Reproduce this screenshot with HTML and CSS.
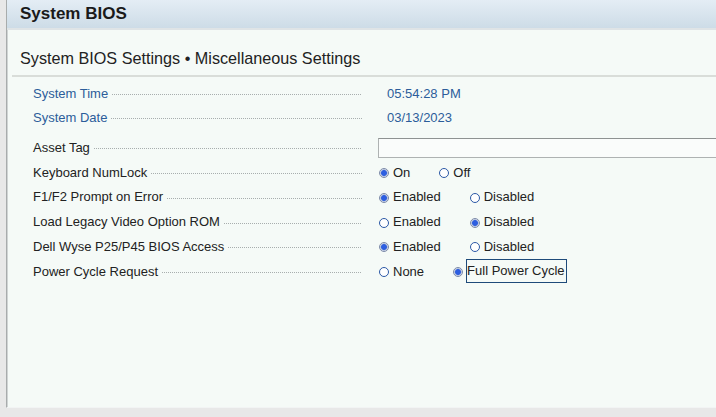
FILE: index.html
```html
<!DOCTYPE html>
<html>
<head>
<meta charset="utf-8">
<link rel="stylesheet" href="styles.css">
</head>
<body>
<div class="panel">
  <div class="header">System BIOS</div>
  <div class="subtitle">System BIOS Settings • Miscellaneous Settings</div>
  <div class="sep"></div>
  <div class="rows info">
    <div class="row"><div class="label blue"><span>System Time</span><i class="dots"></i></div><div class="value blue val-text">05:54:28 PM</div></div>
    <div class="row"><div class="label blue"><span>System Date</span><i class="dots"></i></div><div class="value blue val-text">03/13/2023</div></div>
  </div>
  <div class="rows settings">
    <div class="row"><div class="label"><span>Asset Tag</span><i class="dots"></i></div><div class="value"><div class="input"></div></div></div>
    <div class="row"><div class="label"><span>Keyboard NumLock</span><i class="dots"></i></div><div class="value opts"><span class="opt"><b class="radio on"></b>On</span><span class="opt"><b class="radio"></b>Off</span></div></div>
    <div class="row"><div class="label"><span>F1/F2 Prompt on Error</span><i class="dots"></i></div><div class="value opts"><span class="opt"><b class="radio on"></b>Enabled</span><span class="opt"><b class="radio"></b>Disabled</span></div></div>
    <div class="row"><div class="label"><span>Load Legacy Video Option ROM</span><i class="dots"></i></div><div class="value opts"><span class="opt"><b class="radio"></b>Enabled</span><span class="opt"><b class="radio on"></b>Disabled</span></div></div>
    <div class="row"><div class="label"><span>Dell Wyse P25/P45 BIOS Access</span><i class="dots"></i></div><div class="value opts"><span class="opt"><b class="radio on"></b>Enabled</span><span class="opt"><b class="radio"></b>Disabled</span></div></div>
    <div class="row"><div class="label"><span>Power Cycle Request</span><i class="dots"></i></div><div class="value opts"><span class="opt"><b class="radio"></b>None</span><span class="opt"><b class="radio on"></b><span class="focus">Full Power Cycle</span></span></div></div>
  </div>
</div>
</body>
</html>
```
FILE: styles.css
```css
html, body {
  margin: 0;
  padding: 0;
  background: #e8e8e8;
  overflow: hidden;
}
body {
  width: 716px;
  height: 417px;
  font-family: "Liberation Sans", Arial, sans-serif;
  color: #222;
}
.panel {
  margin-left: 6px;
  height: 407px;
  border-left: 1px solid #a8acac;
  box-shadow: inset 1px 0 0 #d0d4d4;
  border-bottom: 1px solid #f2f4f4;
  background: #f5faf7;
  padding-left: 2px;
}
.header {
  height: 28px;
  margin-left: -2px;
  padding-left: 13px;
  border-bottom: 2px solid #dfe4e6;
  background: linear-gradient(#e4edf5, #cddce7);
  font-weight: bold;
  font-size: 17px;
  line-height: 28px;
  color: #1a1a1a;
}
.subtitle {
  height: 45px;
  padding-left: 11px;
  padding-bottom: 8px;
  font-size: 16.2px;
  line-height: 17px;
  display: flex;
  align-items: flex-end;
  box-sizing: border-box;
}
.sep {
  margin-left: 3px;
  height: 2px;
  background: #d9ddd9;
}
.rows {
  display: flex;
  flex-direction: column;
  padding-left: 24px;
}
.info {
  padding-top: 4px;
}
.info .row {
  height: 24px;
}
.settings {
  padding-top: 6px;
}
.row {
  height: 24.75px;
  display: flex;
  align-items: center;
  font-size: 13px;
}
.label {
  width: 329px;
  flex-shrink: 0;
  display: flex;
  align-items: center;
  margin-right: 16px;
  white-space: nowrap;
}
.dots {
  flex: 1;
  margin-left: 4px;
  height: 1px;
  margin-top: 3px;
  background-image: linear-gradient(to right, #a8aeae 50%, transparent 50%);
  background-size: 2px 1px;
}
.blue {
  color: #2c5d9a;
}
.val-text {
  padding-left: 9px;
}
.value {
  flex: 1;
  min-width: 0;
}
.input {
  height: 18px;
  margin-top: 1px;
  border: 1px solid #aeb2b2;
  border-top-color: #8e9292;
  border-right: none;
  background: #fafcfb;
}
.opts {
  display: flex;
  gap: 28px;
  align-items: center;
}
.opt {
  display: flex;
  align-items: center;
}
.radio {
  width: 10px;
  height: 10px;
  border: 1px solid #2b58a6;
  border-radius: 50%;
  box-sizing: border-box;
  margin: 2px 4px 0 1px;
  background: #fff;
}
.radio.on {
  border-color: #7c8aa8;
  background: radial-gradient(circle, #2d5ee0 0, #2d5ee0 2.5px, #9fb0d8 3.2px, #e8ecf4 4px);
}
.focus {
  border: 1px solid #1e4a7a;
  padding: 3px 1px 4px 0;
  margin-top: -1px;
  margin-left: -1px;
}
```
